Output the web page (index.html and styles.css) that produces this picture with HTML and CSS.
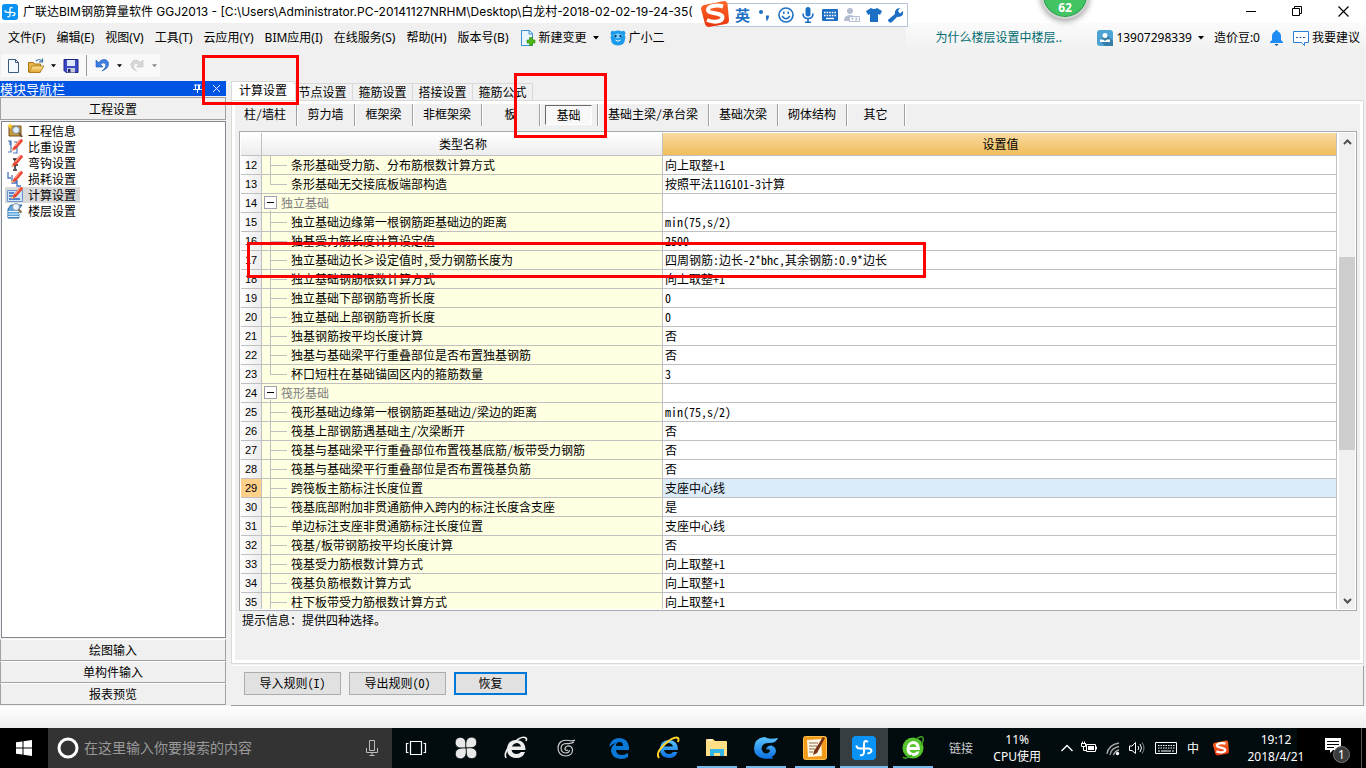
FILE: index.html
```html
<!DOCTYPE html>
<html lang="zh-CN">
<head>
<meta charset="utf-8">
<title>广联达BIM钢筋算量软件 GGJ2013</title>
<link rel="stylesheet" href="styles.css">
</head>
<body>
<svg class="defs" aria-hidden="true">
  <defs>
    <linearGradient id="gRed" x1="0" y1="0" x2="0" y2="1"><stop offset="0" stop-color="#ff6a2a"/><stop offset="1" stop-color="#e8340c"/></linearGradient>
    <linearGradient id="gFold" x1="0" y1="0" x2="0" y2="1"><stop offset="0" stop-color="#ffe9a0"/><stop offset="1" stop-color="#e0a02c"/></linearGradient>
    <linearGradient id="gBlue" x1="0" y1="0" x2="0" y2="1"><stop offset="0" stop-color="#5cc4ff"/><stop offset="1" stop-color="#0a6fe0"/></linearGradient>
    <symbol id="glodon" viewBox="0 0 24 24"><rect width="24" height="24" rx="4" fill="#0a93f5"/><path d="M16 6q-4-2.500-4 2v8q0 4-4 3M4.500 9.500q0 3 3.500 3h8q3.500 0 3.500 2.500-1 3-4 2" fill="none" stroke="#fff" stroke-width="2"/></symbol>
    <symbol id="pencil" viewBox="0 0 16 16"><path d="M5 10 12 1l3-1 1 2-7 8-4 2z" fill="#e8432e"/><path d="M8 7l5-6" stroke="#ff9a80" stroke-width="1.500"/><path d="M4 12l1-3 2 2z" fill="#f3c48c"/></symbol>
    <symbol id="sogou" viewBox="0 0 28 28"><path d="M3 5 23 1q3 0 3.500 3L28 20q0 3-3 4L8 27q-3 0-4-3L0 9q0-3 3-4z" fill="url(#gRed)"/><path d="M22 6.500C15 4.500 7 6 7 10s15 2.500 14.500 7.500S12 22.500 6 20" fill="none" stroke="#fff" stroke-width="4"/></symbol>
    <symbol id="caret" viewBox="0 0 6 4"><path d="M0 0h6L3 3.500z" fill="currentColor"/></symbol>
  </defs>
</svg>

<header class="titlebar">
  <svg class="i16"><use href="#glodon"/></svg>
  <h1 class="title">广联达BIM钢筋算量软件 GGJ2013 - [C:\Users\Administrator.PC-20141127NRHM\Desktop\白龙村-2018-02-02-19-24-35(</h1>
  <div class="winctl">
    <button aria-label="最小化"><svg viewBox="0 0 11 11"><path d="M0 5.500h10" stroke="#000"/></svg></button>
    <button aria-label="还原"><svg viewBox="0 0 11 11"><path d="M.5 2.500h7v7h-7zM2.500 2.500v-2h7v7h-2" fill="none" stroke="#000"/></svg></button>
    <button aria-label="关闭"><svg viewBox="0 0 11 11"><path d="M.5.5l10 10M10.500.5l-10 10" stroke="#000" stroke-width="1.200"/></svg></button>
  </div>
</header>

<nav class="menubar">
  <button>文件(F)</button><button>编辑(E)</button><button>视图(V)</button><button>工具(T)</button><button>云应用(Y)</button><button>BIM应用(I)</button><button>在线服务(S)</button><button>帮助(H)</button><button>版本号(B)</button>
  <button class="with-icon"><svg class="i16" viewBox="0 0 16 16"><path d="M1.500.5h8l3 3v12h-11z" fill="#eaf5ff" stroke="#3a8fd0"/><path d="M9 .5v3.500h3.500" fill="none" stroke="#3a8fd0"/><path d="M9.500 7.500h3v2.500H15v3h-2.500v2.500h-3V13H7v-3h2.500z" fill="#4fb81c" stroke="#2f8a0c" stroke-width=".6"/></svg>新建变更<svg class="caret"><use href="#caret"/></svg></button>
  <button class="with-icon"><svg class="i16" viewBox="0 0 16 16"><path d="M1 2q1-2 3-.5Q8-.5 12 1.500 14 0 15 2q1 2-.5 3Q16 7 15 9q0 6-7 6.500Q1 15 1 9 0 7 1.500 5 0 4 1 2z" fill="#1b9bea"/><path d="M3 5q5-3 10 0-2 4-5 3-3 1-5-3z" fill="#7fd3ff"/><circle cx="5.500" cy="6" r="1.200" fill="#073a6a"/><circle cx="10.500" cy="6" r="1.200" fill="#073a6a"/><path d="M5.500 10q2.500 2.500 5 0" fill="none" stroke="#fff"/></svg>广小二</button>
  <a class="tip" href="#tip">为什么楼层设置中楼层..</a>
  <div class="account">
    <button class="with-icon"><svg class="i16" viewBox="0 0 16 16"><rect width="16" height="16" rx="3" fill="#4da3d4"/><path d="M8 3l8 8v5H8l-5-5z" fill="#337ea8"/><circle cx="8" cy="5.500" r="2.500" fill="#fff"/><path d="M3 12V9.500h3L8 11l2-1.500h3V12z" fill="#fff"/></svg>13907298339<svg class="caret"><use href="#caret"/></svg></button>
    <span>造价豆:0</span>
    <button class="with-icon" aria-label="消息"><svg class="bell" viewBox="0 0 13 16"><path d="M6.500 0q1.500 0 1.500 1.500 3 1 3 5V10l2 2v1H0v-1l2-2V6.500q0-4 3-5Q5 0 6.500 0z" fill="#1e8bf5"/><path d="M4.500 14h4l-2 2z" fill="#124c8c"/></svg></button>
    <button class="with-icon"><svg class="i16" viewBox="0 0 16 16"><path d="M.5 1.500h15v11h-4v3l-3-3h-8z" fill="#fff" stroke="#2a80d8"/><path d="M3 7.500h2m1.500 0h2m1.500 0h2" stroke="#2a60a8"/></svg>我要建议</button>
  </div>
</nav>

<div class="toolrow"><div class="toolbar">
  <button aria-label="新建"><svg class="i16" viewBox="0 0 16 16"><path d="M3.500 1.500h7l3 3v10h-10z" fill="#f4f9ff" stroke="#3d5a80"/><path d="M10.500 1.500v3h3" fill="none" stroke="#3d5a80"/></svg></button>
  <button class="drop" aria-label="打开"><svg class="i16" viewBox="0 0 16 16"><path d="M.5 14V4.500h5l1 1.500h6v8z" fill="#e8b546" stroke="#a87414"/><path d="M1 14.500 4 8h12l-4 6.500z" fill="url(#gFold)" stroke="#a87414" stroke-width=".8"/><path d="M8 3q3-3 5.500 0M14.500.5V4H11" fill="none" stroke="#3a6ea5" stroke-width="1.200"/></svg><svg class="caret"><use href="#caret"/></svg></button>
  <button aria-label="保存"><svg class="i16" viewBox="0 0 16 16"><path d="M1 1.500h14v13H3l-2-2z" fill="#3b49c8" stroke="#1d2480"/><path d="M4 2h8v6H4z" fill="#dfe8ff"/><path d="M4 10h8v4.500H4z" fill="#c7cbd8"/><path d="M5 11h2.500v3.500H5z" fill="#222c70"/></svg></button>
  <span class="sep"></span>
  <button class="drop" aria-label="撤销"><svg class="i16" viewBox="0 0 16 16"><path d="M2 2v7h7L6.500 6.500Q9.500 3.500 11.500 6q1.500 3-3.500 7 7-2.500 6.500-8Q13 0 7.500 2L4.500 4.500z" fill="#3f7fe0" stroke="#1c56b4" stroke-width=".6"/></svg><svg class="caret"><use href="#caret"/></svg></button>
  <button class="drop off" aria-label="恢复"><svg class="i16" viewBox="0 0 16 16"><path d="M14 2v7H7.500L10 6.500Q6.500 4 4.500 7q-1 3 3 6Q2 11 2 6.500 3 1 9 2.500L11.500 4.500z" fill="#d8d8d8" stroke="#bdbdbd" stroke-width=".6"/></svg><svg class="caret"><use href="#caret"/></svg></button>
</div></div>

<div class="work">
  <aside class="side">
    <div class="side-head"><span>模块导航栏</span>
      <button aria-label="固定"><svg viewBox="0 0 9 9"><path d="M1 1h7M2.500 1v4M6.500 1v4M5.500 1v4M0 5.500h9M4.500 6v3" stroke="#fff" fill="none"/></svg></button>
      <button aria-label="关闭"><svg viewBox="0 0 9 9"><path d="M1 1l7 7M8 1 1 8" stroke="#fff"/></svg></button></div>
    <button class="side-btn first">工程设置</button>
    <ul class="side-list">
      <li><a href="#a"><svg class="i16" viewBox="0 0 16 16"><path d="M2 3h12v10H2z" fill="#c89a3c" stroke="#6e501c"/><path d="M3 0l1 2 2 1-2 1-1 2-1-2-2-1 2-1z" fill="#ffcf30"/><circle cx="9" cy="7" r="3.500" fill="#dff0ff" stroke="#7a8ba0"/><path d="M12 10l3 4" stroke="#705030" stroke-width="2"/></svg>工程信息</a></li>
      <li><a href="#b"><svg class="i16" viewBox="0 0 16 16"><path d="M1 2h3v11H1M3 2v4M6 14h4V3H7M8 7h2" fill="none" stroke="#4a78c0" stroke-width="1.200"/><use href="#pencil"/></svg>比重设置</a></li>
      <li><a href="#c"><svg class="i16" viewBox="0 0 16 16"><path d="M6 4h4M8 4v10M5 10h6M6 15h4" fill="none" stroke="#222" stroke-width="1.500"/><use href="#pencil"/></svg>弯钩设置</a></li>
      <li><a href="#d"><svg class="i16" viewBox="0 0 16 16"><path d="M1 1v6h3M5 4v8h4V7M10 9v6h4" fill="none" stroke="#4a78c0" stroke-width="1.300"/><use href="#pencil"/></svg>损耗设置</a></li>
      <li><a href="#e" class="on"><svg class="i16" viewBox="0 0 16 16"><path d="M.5 3.500h15v11H.5z" fill="#cfe3fb" stroke="#6a94cc"/><path d="M2 6h5M2 9h4M2 12h11" stroke="#2f66b8" stroke-width="1.300"/><use href="#pencil"/></svg>计算设置</a></li>
      <li><a href="#f"><svg class="i16" viewBox="0 0 16 16"><path d="M1 6l3-4h11l-3 4v9H1z" fill="#5da4dc" stroke="#2868a4"/><path d="M1 8.500h11l3-3M1 11h11l3-3M1 13.500h11l3-3" stroke="#e4f3ff" fill="none"/><circle cx="9" cy="4" r="3.500" fill="#e9f4ff" stroke="#8898a8"/><path d="M11.500 6.500l3 3" stroke="#8a6a3c" stroke-width="1.800"/></svg>楼层设置</a></li>
    </ul>
    <button class="side-btn">绘图输入</button>
    <button class="side-btn">单构件输入</button>
    <button class="side-btn">报表预览</button>
  </aside>

  <main class="main">
    <div class="tabs">
      <button class="on">计算设置</button><button>节点设置</button><button>箍筋设置</button><button>搭接设置</button><button>箍筋公式</button>
    </div>
    <section class="page">
      <div class="subtabs">
        <button>柱/墙柱</button><button>剪力墙</button><button>框架梁</button><button>非框架梁</button><button>板</button><button class="on"><span>基础</span></button><button>基础主梁/承台梁</button><button>基础次梁</button><button>砌体结构</button><button>其它</button>
      </div>
      <div class="gridbox">
        <div class="gridview">
        <table class="grid">
          <thead><tr><th class="no"></th><th class="name">类型名称</th><th class="val">设置值</th></tr></thead>
          <tbody>
            <tr><th>12</th><td class="leaf">条形基础受力筋、分布筋根数计算方式</td><td>向上取整+1</td></tr>
            <tr><th>13</th><td class="leaf end">条形基础无交接底板端部构造</td><td>按照平法11G101-3计算</td></tr>
            <tr><th>14</th><td class="group"><button aria-label="折叠"></button>独立基础</td><td></td></tr>
            <tr><th>15</th><td class="leaf">独立基础边缘第一根钢筋距基础边的距离</td><td>min(75,s/2)</td></tr>
            <tr><th>16</th><td class="leaf">独基受力筋长度计算设定值</td><td>2500</td></tr>
            <tr><th>17</th><td class="leaf">独立基础边长≥设定值时,受力钢筋长度为</td><td>四周钢筋:边长-2*bhc,其余钢筋:0.9*边长</td></tr>
            <tr><th>18</th><td class="leaf">独立基础钢筋根数计算方式</td><td>向上取整+1</td></tr>
            <tr><th>19</th><td class="leaf">独立基础下部钢筋弯折长度</td><td>0</td></tr>
            <tr><th>20</th><td class="leaf">独立基础上部钢筋弯折长度</td><td>0</td></tr>
            <tr><th>21</th><td class="leaf">独基钢筋按平均长度计算</td><td>否</td></tr>
            <tr><th>22</th><td class="leaf">独基与基础梁平行重叠部位是否布置独基钢筋</td><td>否</td></tr>
            <tr><th>23</th><td class="leaf end">杯口短柱在基础锚固区内的箍筋数量</td><td>3</td></tr>
            <tr><th>24</th><td class="group"><button aria-label="折叠"></button>筏形基础</td><td></td></tr>
            <tr><th>25</th><td class="leaf">筏形基础边缘第一根钢筋距基础边/梁边的距离</td><td>min(75,s/2)</td></tr>
            <tr><th>26</th><td class="leaf">筏基上部钢筋遇基础主/次梁断开</td><td>否</td></tr>
            <tr><th>27</th><td class="leaf">筏基与基础梁平行重叠部位布置筏基底筋/板带受力钢筋</td><td>否</td></tr>
            <tr><th>28</th><td class="leaf">筏基与基础梁平行重叠部位是否布置筏基负筋</td><td>否</td></tr>
            <tr class="cur"><th>29</th><td class="leaf">跨筏板主筋标注长度位置</td><td>支座中心线</td></tr>
            <tr><th>30</th><td class="leaf">筏基底部附加非贯通筋伸入跨内的标注长度含支座</td><td>是</td></tr>
            <tr><th>31</th><td class="leaf">单边标注支座非贯通筋标注长度位置</td><td>支座中心线</td></tr>
            <tr><th>32</th><td class="leaf">筏基/板带钢筋按平均长度计算</td><td>否</td></tr>
            <tr><th>33</th><td class="leaf">筏基受力筋根数计算方式</td><td>向上取整+1</td></tr>
            <tr><th>34</th><td class="leaf">筏基负筋根数计算方式</td><td>向上取整+1</td></tr>
            <tr><th>35</th><td class="leaf">柱下板带受力筋根数计算方式</td><td>向上取整+1</td></tr>
          </tbody>
        </table>
        </div>
        <div class="scroll">
          <button aria-label="向上"><svg viewBox="0 0 9 6"><path d="M1 5l3.500-3.500L8 5" fill="none" stroke="#505050" stroke-width="2"/></svg></button>
          <div class="track"><div class="thumb"></div></div>
          <button aria-label="向下"><svg viewBox="0 0 9 6"><path d="M1 1l3.500 3.500L8 1" fill="none" stroke="#505050" stroke-width="2"/></svg></button>
        </div>
      </div>
      <p class="hint">提示信息：提供四种选择。</p>
    </section>
    <div class="actions">
      <button>导入规则(I)</button><button>导出规则(O)</button><button class="focus">恢复</button>
    </div>
  </main>
</div>
<div class="status"></div>

<footer class="taskbar">
  <button class="start" aria-label="开始"><svg viewBox="0 0 16 16"><path d="M0 2.300 6.500 1.400V7.500H0zM7.500 1.200 16 0v7.500H7.500zM0 8.500h6.500v6.100L0 13.700zM7.500 8.500H16V16l-8.500-1.200z" fill="#fff"/></svg></button>
  <label class="search"><svg class="cortana" viewBox="0 0 22 22"><circle cx="11" cy="11" r="9" fill="none" stroke="#fff" stroke-width="3"/></svg>
    <input type="text" placeholder="在这里输入你要搜索的内容" aria-label="搜索">
    <svg class="mic" viewBox="0 0 12 16"><path d="M3.500.5h5v10h-5zM.5 8v4.500h11V8M6 12.500v3M3.500 15.500h5" fill="none" stroke="#bbb"/></svg></label>
  <div class="apps pinned">
    <button aria-label="任务视图"><svg viewBox="0 0 24 24"><path d="M6.500 5.500h11v13h-11zM4.500 7.500h-2v9h2M19.500 7.500h2v9h-2" fill="none" stroke="#fff" stroke-width="1.200"/></svg></button>
    <button aria-label="应用"><svg viewBox="0 0 24 24"><g fill="#e8e8e8" stroke="#020b0e" stroke-width=".8"><path d="M12 12Q3 13.500 1.200 8 .5 2 6 1.200 13 1 12 12z"/><path d="M12 12Q10.500 3 16 1.200q6-.7 6.800 4.800Q23 13 12 12z"/><path d="M12 12q9-1.500 10.800 4 .7 6-4.800 6.800Q11 23 12 12z"/><path d="M12 12q1.500 9-4 10.800-6 .7-6.800-4.800Q1 11 12 12z"/></g></svg></button>
    <button aria-label="浏览器"><svg viewBox="0 0 24 24"><path d="M21.500 14H7.500q1 4 5 4 3 0 4.500-2h4q-2 6-8.500 6Q3 21.500 3 13q.5-9 9.500-9 9 .5 9 10zM8 10.500h9Q16 7 12.500 7 9 7.500 8 10.500z" fill="#eee"/><path d="M2 22Q-1 16 9 7q9-8 13-5 1 1 0 3" fill="none" stroke="#eee" stroke-width="1.600"/></svg></button>
    <button aria-label="游戏"><svg viewBox="0 0 24 24"><path d="M21 4q-2 1.500-6 .5Q5 3 4 11.500q0 8 7.500 8.500 7.500-.5 7-6.500-1-4-5-3.500-3 1-2.500 3.500 1 1.500 3 .5M20 6q-3 2-7 1.500-6 0-6 5 .5 4.500 5 4.500 3.500-.5 3.500-3" fill="none" stroke="#ccc" stroke-width="1.200"/></svg></button>
  </div>
  <div class="apps">
    <button aria-label="Edge"><svg viewBox="0 0 24 24"><path d="M2 11Q4 2 12.500 2 21 2.500 22 11v3H9q0 5 6 5 3 0 6-2v4q-3 2-7 2-9-.5-10-8 0-5 5-8-4 1-7 4zM9 10h7q0-4-3.500-4T9 10z" fill="#0a78d7"/></svg></button>
    <button aria-label="Internet Explorer"><svg viewBox="0 0 24 24"><path d="M22 14H8q1 4 5 4 3 0 4-2h4.500q-2 6-8.500 6-9-.5-9-9t9-9q9 .5 9 10zM8 10.500h9Q16 7 12.500 7 9 7.500 8 10.500z" fill="url(#gBlue)"/><path d="M3 22Q-1 17 9 8q9-8 13-6 1 1 0 4" fill="none" stroke="#ffd32e" stroke-width="2"/></svg></button>
    <button class="run" aria-label="文件资源管理器"><svg viewBox="0 0 24 24"><path d="M1 4q0-1 1-1h6l2 2h11q1 0 1 1v14H1z" fill="#ffdf85"/><path d="M3 4h4" stroke="#fff"/><path d="M5 20v-7h14v7h-4v-3H9v3z" fill="#33b5ea"/></svg></button>
    <button class="run" aria-label="浏览器"><svg viewBox="0 0 24 24"><path d="M24 2q-2 5-8 5-8-.5-8.500 5.500.5 4.500 4.500 5 3.500-.5 4-3-1-2-4-1 1-4 5.500-4 4.500 1.500 4.500 6-1 4-4 5l1 2Q1 24.500 0 13 0 2 11 1q3 3 13 1z" fill="url(#gBlue)"/></svg></button>
    <button class="run" aria-label="记事"><svg viewBox="0 0 24 24"><rect x=".5" y=".5" width="23" height="23" rx="2" fill="#f39a1b" stroke="#ffbf4a"/><path d="M4 4l14-1 1 17-14 1z" fill="#fff8e4"/><path d="M6 7h9M6 10h8M6 13h6M6 16h4" stroke="#8a6a4a"/><path d="M11 15 20 1l2 1-8 15-4 2z" fill="#773014"/></svg></button>
    <button class="run on" aria-label="广联达"><svg viewBox="0 0 24 24"><use href="#glodon"/></svg></button>
    <button class="run" aria-label="360浏览器"><svg viewBox="0 0 24 24"><circle cx="12" cy="12" r="10.500" fill="#55c42c"/><path d="M19 14H8.500q1 3 4 3 2 0 3-1.500h3Q17 20 12.500 20 5.500 19.500 5.500 12.500 6 5.500 12.500 5 19 5.500 19 14zM8.500 11h7q-.5-3-3.500-3t-3.500 3z" fill="#fff"/><path d="M2 21q2 3 9-2M15 3q6-4 7-1t-2 7" fill="none" stroke="#3a9c1c" stroke-width="1.500"/></svg></button>
  </div>
  <span class="links">链接</span>
  <div class="cpu"><span>11%</span><span>CPU使用</span></div>
  <div class="tray">
    <svg class="w12" viewBox="0 0 12 16"><path d="M.5 11 6 5.500l5.500 5.500" fill="none" stroke="#fff" stroke-width="1.400"/></svg>
    <svg class="w16" viewBox="0 0 16 16"><path d="M5.500 4.500h9v7h-9z" fill="none" stroke="#fff"/><path d="M7 6h6v4H7z" fill="#fff"/><path d="M15.500 6.500v3M0 3.500h5M1.500 1.500v2M3.500 1.500v2M.5 4v2.500h4V4M2.500 6.500v4h3" fill="none" stroke="#fff"/></svg>
    <svg class="w16" viewBox="0 0 16 16"><path d="M2 14Q3 5 14 3M5 15q1-7 9-8.500M8.500 15q1-4 5.500-5" fill="none" stroke="#aaa" stroke-width="1.300"/><circle cx="12.500" cy="13.500" r="1.700" fill="#fff"/></svg>
    <svg class="w16" viewBox="0 0 16 16"><path d="M.5 6v4.500H3l3.500 3v-11L3 6z" fill="none" stroke="#fff"/><path d="M9 6q1.500 2 0 4M11 4q3 4 0 8" fill="none" stroke="#fff"/><path d="M13 2.500q4 5.500 0 11" fill="none" stroke="#888"/></svg>
    <svg class="w22" viewBox="0 0 22 14"><path d="M.5 1.500h21v11H.5z" fill="none" stroke="#fff"/><path d="M3 4.500h17M3 7h17" stroke="#fff" stroke-dasharray="1.500 1"/><path d="M3 10h2m1 0h10m1 0h2" stroke="#fff"/></svg>
    <span>中</span>
    <svg class="w16 sg" viewBox="0 0 28 28"><use href="#sogou"/></svg>
  </div>
  <div class="clock"><time>19:12</time><time>2018/4/21</time></div>
  <button class="notify" aria-label="通知"><svg viewBox="0 0 24 24"><path d="M1 2h16v12H9l-3 3v-3H1z" fill="#fff"/><path d="M3 5.500h12M3 8.500h12M3 11.500h7" stroke="#000"/></svg><span>1</span></button>
</footer>

<div class="ime">
  <b>英</b>
  <svg class="i16" viewBox="0 0 16 16"><circle cx="5" cy="5" r="2" fill="#1c6fc4"/><path d="M10 8.500h3q0 4-3 6 1-2 0-3z" fill="#1c6fc4"/></svg>
  <svg class="i16" viewBox="0 0 16 16"><circle cx="8" cy="8" r="7" fill="none" stroke="#1c6fc4" stroke-width="1.600"/><path d="M5.800 4.500v2.500M10.200 4.500v2.500M4 9q4 5.500 8 0" fill="none" stroke="#1c6fc4" stroke-width="1.500"/></svg>
  <svg class="i16" viewBox="0 0 16 16"><rect x="5.500" y="0" width="5" height="9.500" rx="2.500" fill="#1c6fc4"/><path d="M3 6.500q0 5 5 5t5-5M8 11.500V15M5 15.200h6" fill="none" stroke="#1c6fc4" stroke-width="1.600"/></svg>
  <svg class="i16" viewBox="0 0 16 16"><rect y="2" width="16" height="12" rx="1" fill="#1c6fc4"/><path d="M2 5.500h12M2 8.500h12" stroke="#fff" stroke-width="1.400" stroke-dasharray="1.600 1"/><path d="M4 11.500h8" stroke="#fff" stroke-width="1.400"/></svg>
  <svg class="i16" viewBox="0 0 16 16"><circle cx="6" cy="4" r="3" fill="#b3bdd0"/><path d="M0 14q0-6 6-6 4 0 5 3v3z" fill="#b3bdd0"/><path d="M5.500 9.500h10v5h-10z" fill="#fff" stroke="#b3bdd0"/><path d="M7 11h2v1.500h-1M11 11h2v2h-2" fill="none" stroke="#b3bdd0"/></svg>
  <svg class="i16" viewBox="0 0 16 16"><path d="M5 1q3 2 6 0l5 3-2 4-2-1v8H4V7L2 8 0 4z" fill="#1c6fc4"/></svg>
  <svg class="i16" viewBox="0 0 16 16"><path d="M1 15q-2-2 0-3l6-5Q6 2 12 1L10 4l2 2.500L15 4q1 6-6 6l-5 5q-1.500 1-3 0z" fill="#1c6fc4"/></svg>
</div>
<svg class="ime-logo" viewBox="0 0 28 28"><use href="#sogou"/></svg>
<div class="score">62</div>
<div class="mark mark-tab"></div>
<div class="mark mark-sub"></div>
<div class="mark mark-row"></div>
</body>
</html>
```
FILE: styles.css
```css
:root {
  --song: "Noto Sans Mono CJK SC", "Noto Sans CJK SC", sans-serif;
  --ui: "Noto Sans", "Noto Sans CJK SC", sans-serif;
  --line: #c0c0c0;
  --face: #f0f0f0;
}
* { box-sizing: border-box; }
body {
  margin: 0;
  height: 100vh;
  display: flex;
  flex-direction: column;
  overflow: hidden;
  position: relative;
  background: var(--face);
  color: #000;
  font: 12px/16px var(--song);
}
button { font: inherit; color: inherit; background: none; border: 0; padding: 0; margin: 0; white-space: nowrap; }
a { color: inherit; text-decoration: none; }
svg { display: block; flex: none; }
.defs { position: absolute; width: 0; height: 0; }
.i16 { width: 16px; height: 16px; }
.caret { width: 6px; height: 4px; }

.titlebar { display: flex; align-items: center; height: 23px; padding-left: 2px; gap: 5px; background: #fff; }
.title { flex: 1; min-width: 0; margin: 0; font: 400 12px/16px Inter, "Noto Sans CJK SC", sans-serif; white-space: nowrap; overflow: hidden; }
.winctl { display: flex; }
.winctl button { width: 46px; height: 22px; display: grid; place-items: center; }
.winctl svg { width: 11px; height: 11px; }

.menubar { display: flex; align-items: stretch; height: 29px; padding-left: 8px; gap: 11px; font-family: var(--ui); }
.with-icon { display: flex; align-items: center; gap: 3px; }
.with-icon .caret { margin-left: 3px; }
.tip { margin-left: auto; width: 186px; padding-left: 29px; line-height: 28px; color: #006c70; font-family: "Noto Sans CJK SC", sans-serif; background: linear-gradient(#fbfbfb, #f0f0f0); }
.account { display: flex; align-items: center; gap: 10px; margin-left: -11px; padding: 0 6px 0 5px; background: linear-gradient(#fbfbfb, #f0f0f0); }
.bell { width: 13px; height: 16px; }

.toolrow { height: 29px; padding: 2px 0 0 1px; }
.toolbar { display: flex; align-items: center; width: 159px; height: 23px; padding-left: 4px; gap: 7px; border-radius: 2px; background: #f9f9f9; }
.drop { display: flex; align-items: center; gap: 7px; }
.drop .caret { width: 5px; }
.off { color: #8a8a8a; }
.sep { width: 1px; height: 21px; background: #9a9a9a; }

.work { flex: 1; min-height: 0; display: flex; gap: 5px; }
.side { width: 226px; display: flex; flex-direction: column; padding-bottom: 1px; }
.side-head { display: flex; align-items: center; gap: 10px; height: 15px; margin-bottom: 1px; padding-right: 5px; background: #0054e3; color: #fff; font-size: 13px; line-height: 15px; }
.side-head span { flex: 1; }
.side-head svg { width: 9px; height: 9px; }
.side-btn { height: 22px; border: 1px solid #a0a0a0; border-top-color: #fff; background: var(--face); text-align: center; }
.side-btn.first { height: 23px; border-color: #a0a0a0; }
.side-list { flex: 1; margin: 1px 0 1px 1px; padding: 1px 0 0 3px; list-style: none; background: #fff; border: 1px solid #828790; }
.side-list a { display: inline-flex; align-items: center; gap: 5px; height: 16px; padding: 0 4px 0 2px; vertical-align: top; }
.side-list li { height: 16px; }
.side-list .on { background: #d9d9d9; }

.main { flex: 1; min-width: 0; display: flex; flex-direction: column; padding-right: 2px; }
.tabs { display: flex; align-items: flex-end; height: 19px; }
.tabs button { width: 60px; height: 17px; border: 1px solid #d9d9d9; border-width: 1px 1px 0 0; }
.tabs .on { width: 65px; height: 19px; margin-right: -3px; padding: 0 1px 2px 0; border-left-width: 1px; background: #fff; }
.page { flex: 1; min-height: 0; display: flex; flex-direction: column; padding: 3px 6px 0 7px; border: 1px solid #d9d9d9; box-shadow: inset 0 0 0 3px #fff; }
.subtabs { display: flex; height: 22px; margin: 0 0 5px -5px; }
.subtabs button { min-width: 58px; padding: 0 10px 2px; border-right: 1px solid #a0a0a0; box-shadow: 1px 0 #fff; }
.subtabs .on { padding: 0 5px; }
.subtabs .on span { display: block; height: 20px; line-height: 17px; border: 1px solid; border-color: #696969 #fff #fff #696969; background: #f8f8f8; }

.gridbox { flex: 1; min-height: 0; display: flex; gap: 2px; padding: 1px; border: 1px solid #a5acb2; background: #fff; }
.gridview { flex: 1; min-width: 0; overflow: hidden; }
.grid { width: 100%; table-layout: fixed; border-collapse: separate; border-spacing: 0; }
.grid th, .grid td { height: 19px; padding: 1px 0 1px 2px; border: solid var(--line); border-width: 0 1px 1px 0; line-height: 16px; font-weight: 400; white-space: nowrap; text-align: left; background: #fff; }
.grid thead th { height: 23px; text-align: center; background: linear-gradient(#fff, #ededed); }
.grid thead .val { background: linear-gradient(#f9d9a0, #f0be5c); }
.grid .no { width: 21px; }
.grid .name { width: 401px; }
.grid tbody th { padding: 1px 0; text-align: center; font-family: "Liberation Sans", sans-serif; font-size: 11px; background: linear-gradient(90deg, #fff, #ececec); }
.grid .leaf { padding-left: 29px; background: linear-gradient(var(--line), var(--line)) 8px 0 / 1px 100% no-repeat, linear-gradient(var(--line), var(--line)) 9px 9px / 16px 1px no-repeat, #ffffe1; }
.grid .end { background-size: 1px 10px, 16px 1px, auto; }
.grid .group { padding-left: 2px; color: #808080; background: linear-gradient(var(--line), var(--line)) 8px 16px / 1px 2px no-repeat, #ffffe1; }
.group button { width: 13px; height: 13px; margin-right: 4px; vertical-align: top; margin-top: 1px; border: 1px solid #a0a0b0; background: linear-gradient(#000, #000) center / 7px 1px no-repeat #fff; }
.grid .cur th { background: #ffd08a; }
.grid .cur td:last-child { background: #dcebf9; }
.scroll { width: 16px; display: flex; flex-direction: column; background: #f0f0f0; }
.scroll button { height: 17px; display: grid; place-items: center; }
.scroll svg { width: 9px; height: 6px; }
.track { flex: 1; padding-top: 107px; }
.thumb { height: 193px; background: #cdcdcd; }
.hint { height: 52px; margin: 0; padding: 1px 0 0 3px; }

.actions { display: flex; gap: 8px; margin-top: 1px; padding: 6px 13px 10px; border-top: 1px solid #fff; border-bottom: 1px solid #a0a0a0; border-right: 1px solid #a0a0a0; }
.actions button { width: 97px; height: 23px; padding-bottom: 2px; border: 1px solid #adadad; background: #e1e1e1; }
.actions .focus { width: 73px; border: 2px solid #0078d7; }
.status { height: 22px; background: linear-gradient(#fff, #eeeef0); }

.taskbar { display: flex; height: 40px; background: #020b0e; color: #fff; font: 12px/17px var(--ui); }
.start { width: 48px; display: grid; place-items: center; background: #000; }
.start svg { width: 16px; height: 16px; }
.search { width: 344px; display: flex; align-items: center; padding: 0 14px 0 9px; background: #333; }
.cortana { width: 22px; height: 22px; }
.search input { flex: 1; min-width: 0; margin: 0 0 0 5px; padding: 0; border: 0; outline: 0; background: none; color: #aaa; font: 14px/20px var(--ui); }
.search input::placeholder { color: #999; }
.mic { width: 12px; height: 16px; }
.apps { display: flex; gap: 1px; }
.pinned { gap: 2px; margin-right: 5px; }
.apps button { width: 48px; display: grid; place-items: center; border: solid transparent; border-width: 0 4px; }
.apps svg { width: 24px; height: 24px; }
.apps .run { background: linear-gradient(#76b9ed, #76b9ed) 0 100% / 100% 2px no-repeat content-box; }
.apps .on { border-width: 0; background: linear-gradient(#76b9ed, #76b9ed) 0 100% / 100% 2px no-repeat, #363e42; }
.links { margin-left: 12px; align-self: center; color: #ccc; }
.cpu, .clock { display: flex; flex-direction: column; align-items: center; justify-content: center; }
.cpu { margin-left: auto; padding-right: 20px; }
.tray { display: flex; align-items: center; gap: 8px; }
.w12 { width: 12px; height: 16px; }
.w16 { width: 16px; height: 16px; }
.w22 { width: 22px; height: 14px; margin: 0 2px; }
.sg { margin-left: 6px; }
.clock { width: 68px; margin-left: 13px; background: linear-gradient(90deg, transparent 55px, #000 55px); }
.notify { position: relative; width: 56px; padding-left: 14px; background: linear-gradient(#555, #555) 51px 0 / 1px 100% no-repeat #000; }
.notify svg { width: 24px; height: 24px; }
.notify span { position: absolute; left: 23px; top: 18px; width: 17px; height: 17px; border: 1px solid #777; border-radius: 50%; background: #3c3c3c; line-height: 15px; text-align: center; }

.ime { position: absolute; left: 715px; top: 3px; height: 24px; display: flex; align-items: center; gap: 6px; padding: 0 3px 0 19px; border: 1px solid #b8c6da; background: #fff; color: #1c6fc4; }
.ime b { font: 700 15px/22px "Noto Sans CJK SC", sans-serif; }
.ime-logo { position: absolute; left: 701px; top: 0; width: 28px; height: 28px; }
.score { position: absolute; left: 1041px; top: -29px; width: 48px; height: 48px; padding-top: 26px; border: 2px solid #d4d4d4; border-radius: 50%; background: #43c463; box-shadow: inset 0 0 0 1px #2c9a4c, 0 2px 6px #999; color: #fff; text-align: center; font: 700 12px/18px var(--ui); }
.mark { position: absolute; border: 3px solid #f00; pointer-events: none; }
.mark-tab { left: 202px; top: 55px; width: 97px; height: 50px; }
.mark-sub { left: 514px; top: 73px; width: 93px; height: 65px; }
.mark-row { left: 247px; top: 242px; width: 679px; height: 36px; }
```
